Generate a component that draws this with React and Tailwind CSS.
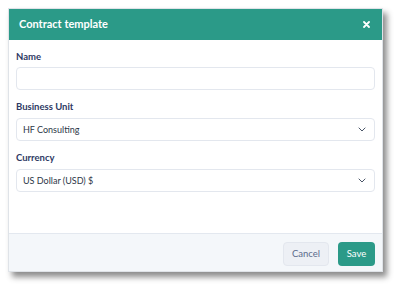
export default function App() {
  const font = { fontFamily: '"Lato", "Open Sans", sans-serif' };
  return (
    <div className="w-[400px] h-[290px] bg-white p-2" style={font}>
      <div className="w-[375px] h-[264px] flex flex-col bg-white border border-[#dfe3e8] shadow-[4px_5px_6px_rgba(0,0,0,0.45)]">
        <div className="h-[31px] shrink-0 bg-[#2b9a88] flex items-center justify-between pl-[10px] pr-[12px]">
          <span className="text-white font-bold text-[11px]">Contract template</span>
          <svg width="7" height="7" viewBox="0 0 7 7">
            <path d="M1 1L6 6M6 1L1 6" stroke="white" strokeWidth="1.8" strokeLinecap="round" />
          </svg>
        </div>
        <div className="flex-1 px-[7px] pt-[10px] flex flex-col">
          <label className="h-[14px] leading-[14px] text-[9.5px] font-bold text-[#2e3a64] mb-[3px]">Name</label>
          <div className="h-[23px] rounded-[4px] border border-[#e3e7ee] bg-white mb-[10px]"></div>
          <label className="h-[14px] leading-[14px] text-[9.5px] font-bold text-[#2e3a64] mb-[4px]">Business Unit</label>
          <div className="h-[23px] rounded-[4px] border border-[#e3e7ee] bg-white mb-[10px] flex items-center justify-between pl-[6px] pr-[8px]">
            <span className="text-[9px] text-[#2d3748]">HF Consulting</span>
            <svg width="8" height="5" viewBox="0 0 8 5">
              <path d="M0.7 0.7L4 4L7.3 0.7" fill="none" stroke="#4a5568" strokeWidth="1" />
            </svg>
          </div>
          <label className="h-[14px] leading-[14px] text-[9.5px] font-bold text-[#2e3a64] mb-[4px]">Currency</label>
          <div className="h-[23px] rounded-[4px] border border-[#e3e7ee] bg-white flex items-center justify-between pl-[6px] pr-[8px]">
            <span className="text-[9px] text-[#2d3748]">US Dollar (USD) $</span>
            <svg width="8" height="5" viewBox="0 0 8 5">
              <path d="M0.7 0.7L4 4L7.3 0.7" fill="none" stroke="#4a5568" strokeWidth="1" />
            </svg>
          </div>
        </div>
        <div className="h-[38px] shrink-0 bg-[#f4f7fa] border-t border-[#e3e8ef] flex items-start justify-end gap-[9px] pt-[8px] pr-[7px]">
          <button className="h-[24px] w-[46px] rounded-[4px] bg-[#edf0f5] border border-[#e3e7ee] text-[9.5px] text-[#5b6b8c]">Cancel</button>
          <button className="h-[24px] w-[37px] rounded-[4px] bg-[#2b9a88] text-[9.5px] text-white">Save</button>
        </div>
      </div>
    </div>
  );
}
